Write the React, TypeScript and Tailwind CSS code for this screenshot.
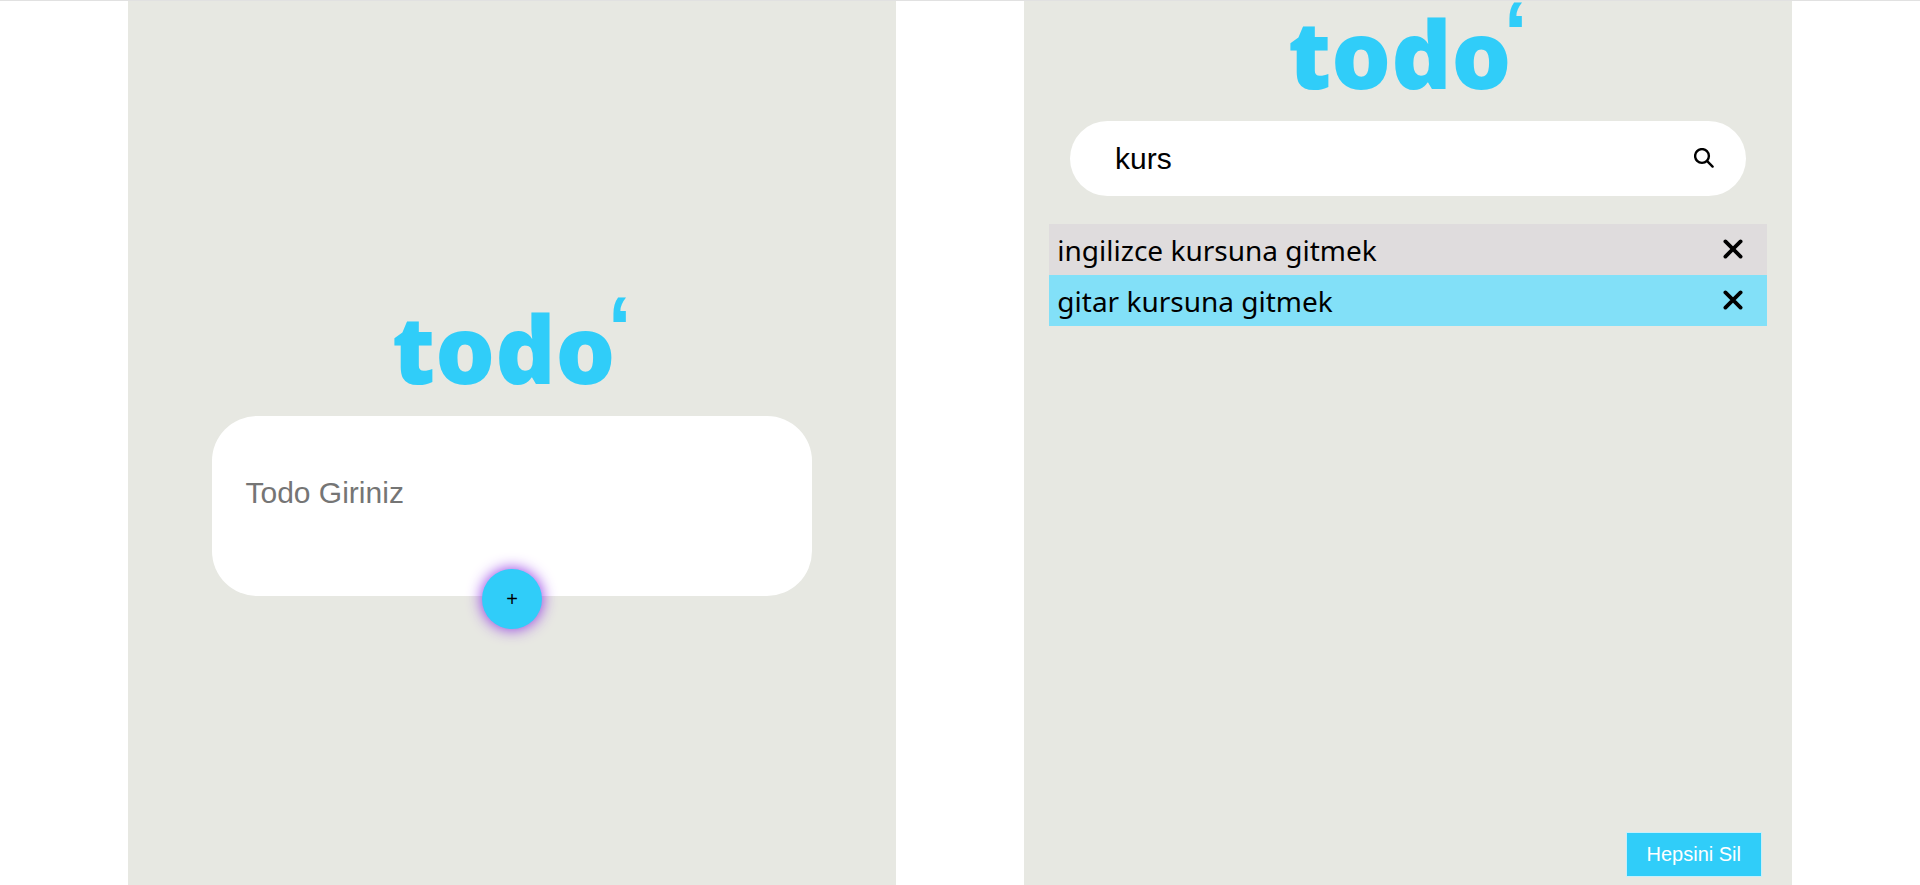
import { useState } from "react";

function Logo() {
  return (
    <h1 className="flex h-[88px] items-start text-[#30cdf9]">
      <span className="font-['Noto_Sans',sans-serif] text-[94px] leading-[104px] font-black">todo</span>
      <span className="-ml-2 font-['Liberation_Sans',sans-serif] text-[88px] leading-[62px] font-bold">‘</span>
    </h1>
  );
}

function SearchIcon() {
  return (
    <svg viewBox="0 0 20 20" className="mb-0.5 size-5" fill="none" stroke="black" strokeWidth="2.4" strokeLinecap="round" aria-hidden="true">
      <circle cx="8" cy="8" r="6.9" />
      <path d="M13.2 13.2 18.6 18.6" />
    </svg>
  );
}

function CloseIcon() {
  return (
    <svg viewBox="0 0 20 20" className="mb-0.5 size-5" fill="none" stroke="black" strokeWidth="3.8" strokeLinecap="round" aria-hidden="true">
      <path d="M2.4 2.4 17.6 17.6M17.6 2.4 2.4 17.6" />
    </svg>
  );
}

const initialTodos = ["ingilizce kursuna gitmek", "gitar kursuna gitmek"];

export default function App() {
  const [todos, setTodos] = useState(initialTodos);
  const [draft, setDraft] = useState("");
  const [query, setQuery] = useState("kurs");

  const addTodo = () => {
    if (draft.trim()) setTodos([...todos, draft.trim()]);
    setDraft("");
  };

  return (
    <main className="flex min-h-screen justify-evenly border-t border-[#e1e1e1] bg-white font-['Liberation_Sans',sans-serif] text-black">
      <section className="flex w-2/5 flex-col items-center justify-center bg-[#e7e8e2] pt-[38px]">
        <Logo />
        <form
          className="mt-8 flex w-[78%] flex-col items-center"
          onSubmit={(e) => {
            e.preventDefault();
            addTodo();
          }}
        >
          <input
            aria-label="Todo Giriniz"
            placeholder="Todo Giriniz"
            value={draft}
            onChange={(e) => setDraft(e.target.value)}
            className="h-[180px] w-full rounded-[45px] bg-white px-[33px] pb-[26px] text-[30px] outline-none placeholder:text-[#757575]"
          />
          <button
            type="submit"
            className="-mt-[27px] size-[60px] rounded-full bg-[#30cdf9] text-xl shadow-[0_0_15px_blueviolet]"
          >
            +
          </button>
        </form>
      </section>

      <section className="flex w-2/5 flex-col items-center bg-[#e7e8e2]">
        <Logo />
        <div className="mt-8 flex h-[75px] w-[88%] items-center rounded-full bg-white pr-8 pl-[45px]">
          <input
            aria-label="Ara"
            value={query}
            onChange={(e) => setQuery(e.target.value)}
            className="min-w-0 flex-1 text-[30px] outline-none"
          />
          <SearchIcon />
        </div>
        <ul className="mt-7 w-[93.4%] font-['Noto_Sans',sans-serif] text-[28px]">
          {todos
            .filter((todo) => todo.includes(query))
            .map((todo) => (
              <li key={todo} className="flex h-[51px] items-center justify-between bg-[#dfdcdd] pr-6 pl-2 even:bg-[#82e0f8]">
                <span>{todo}</span>
                <button type="button" aria-label="Sil" onClick={() => setTodos(todos.filter((t) => t !== todo))}>
                  <CloseIcon />
                </button>
              </li>
            ))}
        </ul>
        <button
          type="button"
          onClick={() => setTodos([])}
          className="mt-auto mr-[30px] mb-2 h-[45px] self-end border border-[#c6effa] bg-[#30cdf9] px-5 pb-0.5 text-xl text-white"
        >
          Hepsini Sil
        </button>
      </section>
    </main>
  );
}
